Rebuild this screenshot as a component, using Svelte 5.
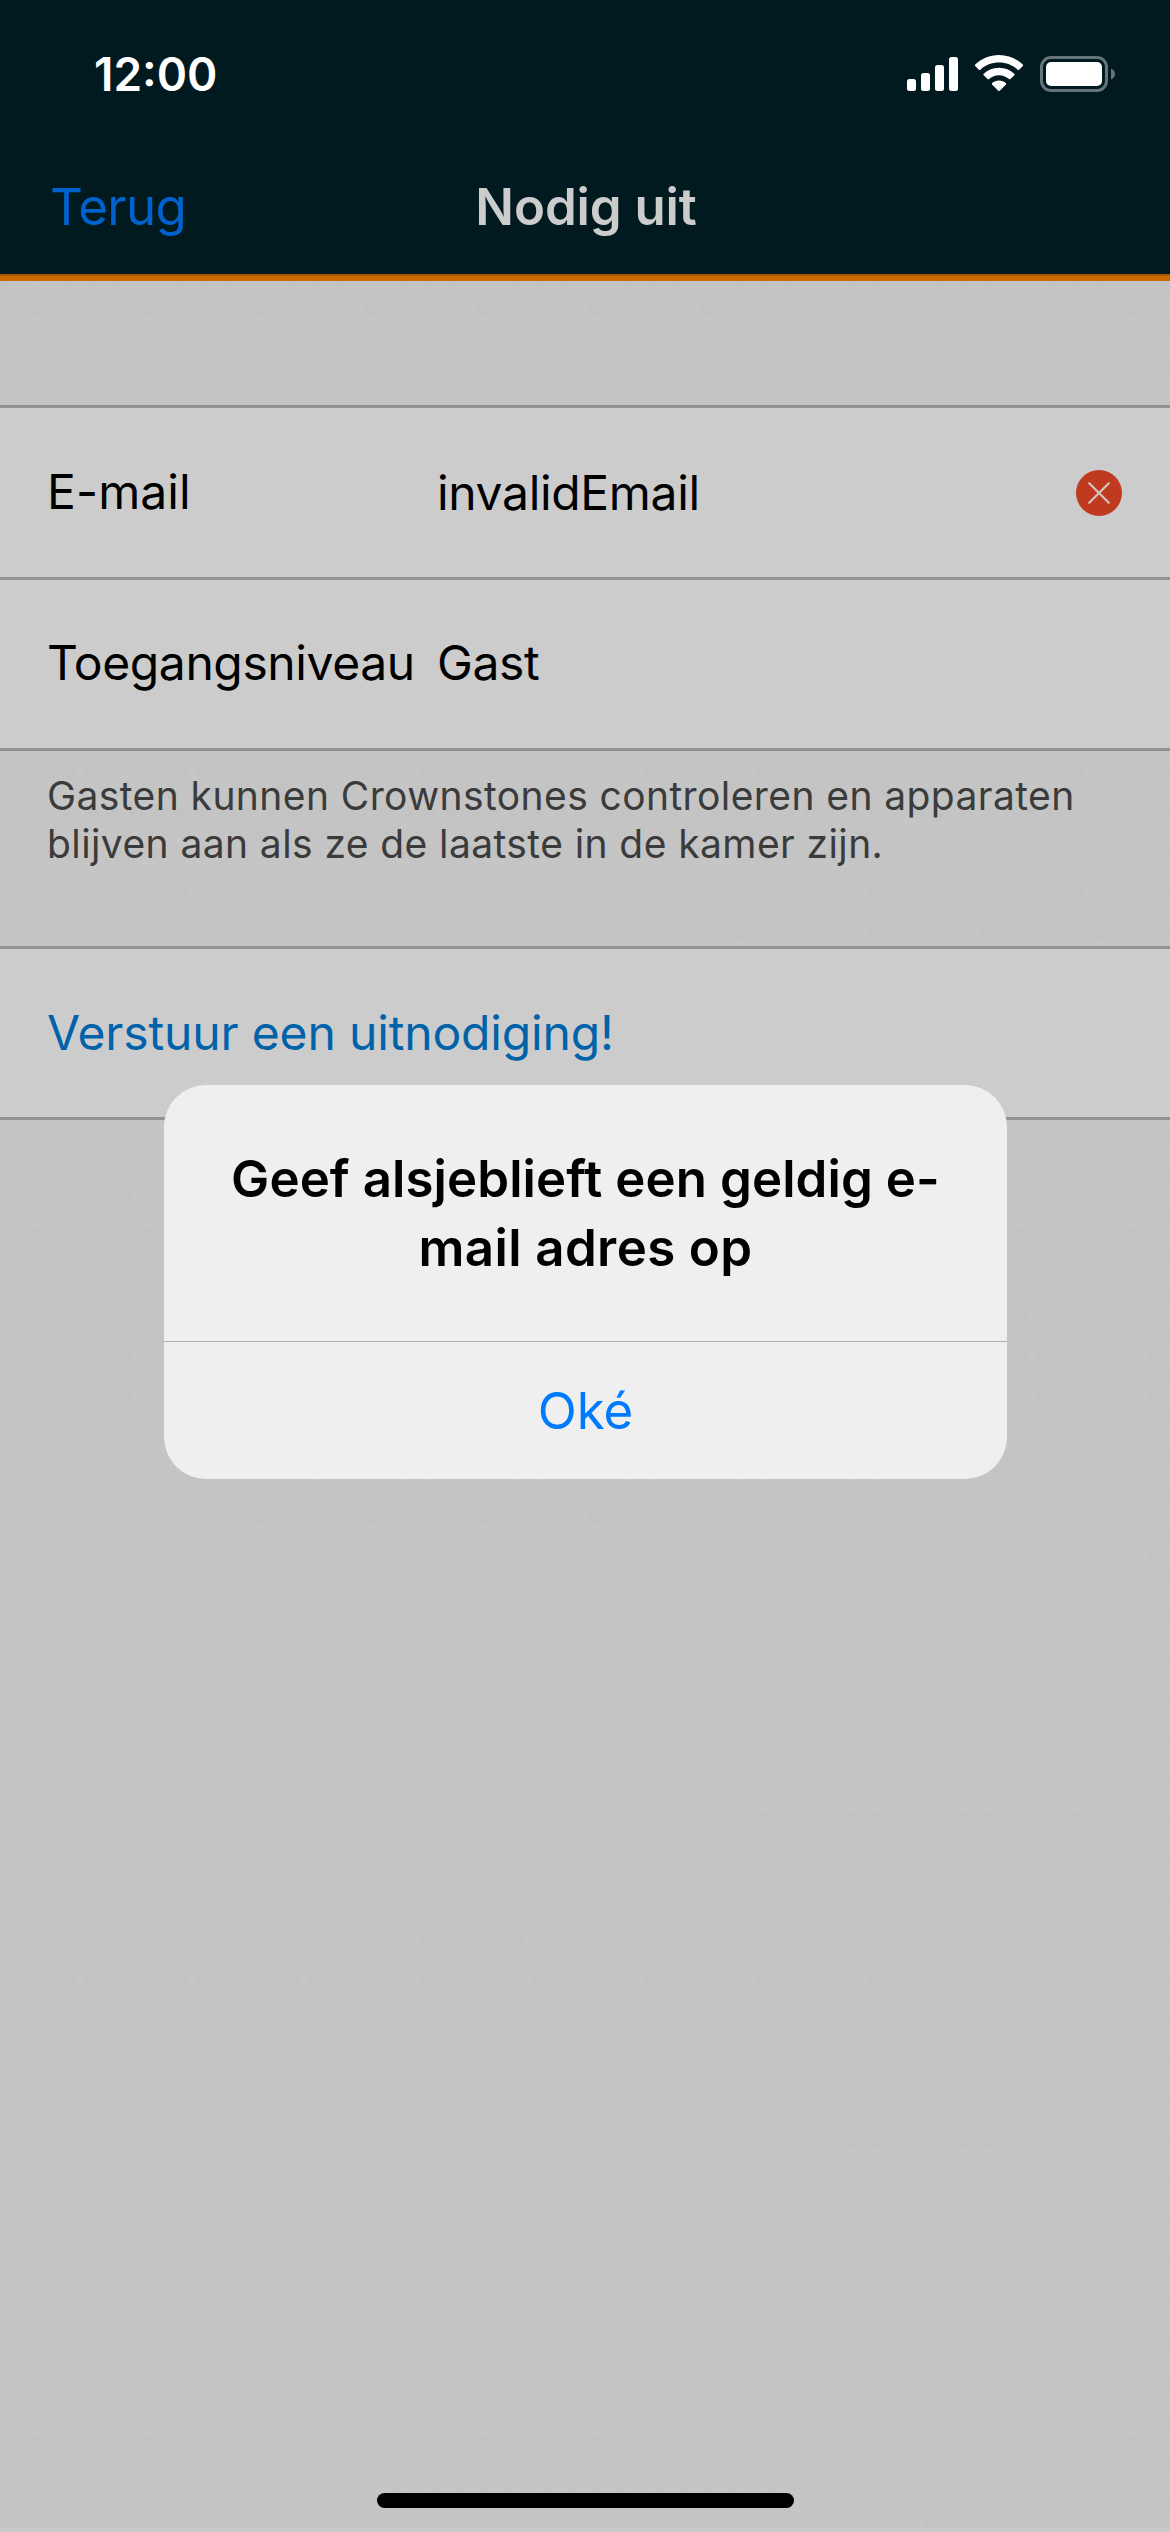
<script>
  const signalBars = [
    { x: 0, height: 12 },
    { x: 14, height: 18 },
    { x: 28, height: 26 },
    { x: 42, height: 34 }
  ];
</script>

<div class="screen">
  <header>
    <div class="status">
      <span class="time">12:00</span>
      <div class="indicators">
        <svg class="signal" width="51" height="38" viewBox="0 0 51 38">
          {#each signalBars as bar}
            <rect x={bar.x} y={36 - bar.height} width="9" height={bar.height} rx="2.5" fill="#fff" />
          {/each}
        </svg>
        <svg class="wifi" width="50" height="38" viewBox="0 0 50 38">
          <path fill="#fff" d="M25 0C34.200 0 42.600 3.600 48.800 9.500Q49.500 10.300 48.800 11.100L45.200 14.700Q44.400 15.400 43.600 14.700C38.700 10.200 32.200 7.600 25 7.600S11.300 10.200 6.400 14.700Q5.600 15.400 4.800 14.700L1.200 11.100Q0.500 10.300 1.200 9.500C7.400 3.600 15.800 0 25 0Z" />
          <path fill="#fff" d="M25 12.800C30.900 12.800 36.300 15 40.300 18.700Q41.100 19.500 40.300 20.300L36.500 24Q35.700 24.700 34.900 24C32.200 21.700 28.800 20.300 25 20.300S17.800 21.700 15.100 24Q14.300 24.700 13.500 24L9.700 20.300Q8.900 19.500 9.700 18.700C13.700 15 19.100 12.800 25 12.800Z" />
          <path fill="#fff" d="M25 25.600C27.600 25.600 30 26.500 31.800 28Q32.600 28.800 31.900 29.600L25.800 35.700Q25 36.400 24.200 35.700L18.100 29.600Q17.400 28.800 18.200 28C20 26.500 22.400 25.600 25 25.600Z" />
        </svg>
        <svg class="battery" width="76" height="38" viewBox="0 0 76 38">
          <rect x="1.500" y="2.500" width="65" height="33" rx="9.500" fill="none" stroke="#667579" stroke-width="3" />
          <rect x="6" y="7" width="56" height="24" rx="5" fill="#fff" />
          <path d="M71 13.500C73.500 14.500 75 16.700 75 19S73.500 23.500 71 24.500Z" fill="#667579" />
        </svg>
      </div>
    </div>
    <nav>
      <a class="back" href="#back">Terug</a>
      <h1>Nodig uit</h1>
    </nav>
  </header>

  <main>
    <section class="fields">
      <div class="row">
        <span class="label">E-mail</span>
        <span class="value">invalidEmail</span>
        <svg class="clear" width="46" height="46" viewBox="0 0 46 46">
          <circle cx="23" cy="23" r="23" fill="#c03a20" />
          <path d="M13.200 13.200L32.800 32.800M32.800 13.200L13.200 32.800" stroke="#d2c4c0" stroke-width="2.200" stroke-linecap="round" />
        </svg>
      </div>
      <div class="row second">
        <span class="label wide">Toegangsniveau</span>
        <span class="value guest">Gast</span>
      </div>
    </section>
    <p class="note">Gasten kunnen Crownstones controleren en apparaten<br />blijven aan als ze de laatste in de kamer zijn.</p>
    <section class="action">
      <div class="row third"><span class="send">Verstuur een uitnodiging!</span></div>
    </section>
  </main>

  <div class="alert" role="alertdialog" aria-labelledby="alert-title">
    <h2 id="alert-title">Geef alsjeblieft een geldig e-<br /><span>mail adres op</span></h2>
    <button type="button">Oké</button>
  </div>
  <div class="home"></div>
</div>

<style>
  :global(body) {
    margin: 0;
  }

  .screen {
    position: relative;
    box-sizing: border-box;
    width: 1170px;
    height: 2532px;
    overflow: hidden;
    border-bottom: 4px solid #cbcbcb;
    background-color: #c5c5c5;
    background-image:
      radial-gradient(circle at 50% 50%, #c3c3c3 0 5px, transparent 10px),
      radial-gradient(circle at 50% 50%, #c3c3c3 0 5px, transparent 10px);
    background-size: 22.400px 40.280px;
    background-position: 2px 7px, 13.200px 27.140px;
    font-family: Inter, "Liberation Sans", sans-serif;
    color: #000;
  }

  header {
    height: 274px;
    padding-bottom: 2px;
    border-bottom: 5px solid #cc6900;
    background: #001a20;
    box-shadow: inset 0 -2px #a85800;
  }

  .status {
    display: flex;
    align-items: center;
    justify-content: space-between;
    height: 148px;
    padding: 0 54px 0 94px;
  }

  .time {
    font-size: 46px;
    font-weight: 600;
    color: #fff;
  }

  .indicators {
    display: flex;
    gap: 16px;
  }

  .signal,
  .wifi,
  .battery {
    display: block;
  }

  nav {
    display: grid;
    grid-template-columns: 1fr auto 1fr;
    align-items: center;
    height: 126px;
    padding: 0 50px 10px;
    box-sizing: border-box;
    font-size: 51px;
  }

  .back {
    color: #0062cc;
    text-decoration: none;
    letter-spacing: -0.660px;
  }

  h1 {
    margin: 0;
    padding-left: 2px;
    font-size: 51px;
    font-weight: 600;
    letter-spacing: -0.110px;
    color: #ccc;
  }

  main {
    padding-top: 124px;
  }

  .fields,
  .action {
    border-top: 3px solid #929292;
  }

  .row {
    display: flex;
    align-items: center;
    height: 169px;
    padding: 0 48px 0 47px;
    border-bottom: 3px solid #929292;
    background: #ccc;
    font-size: 48px;
    line-height: 58px;
  }

  .second,
  .third {
    height: 168px;
  }

  .label {
    width: 390px;
    padding-bottom: 2px;
    letter-spacing: 0.100px;
  }

  .wide {
    letter-spacing: -0.400px;
  }

  .value {
    flex: 1;
    letter-spacing: -0.330px;
  }

  .guest {
    padding-bottom: 2px;
  }

  .note {
    height: 174px;
    margin: 0;
    padding: 21px 47px 0;
    font-size: 39px;
    line-height: 48px;
    letter-spacing: 0.410px;
    color: #3b3b3b;
    white-space: nowrap;
  }

  .send {
    letter-spacing: -0.150px;
    color: #0062a9;
  }

  .alert {
    position: absolute;
    top: 1085px;
    left: 164px;
    width: 843px;
    height: 394px;
    overflow: hidden;
    border-radius: 42px;
    background: #efefef;
    text-align: center;
  }

  h2 {
    height: 256px;
    margin: 0;
    padding-top: 59px;
    box-sizing: border-box;
    font-size: 51px;
    font-weight: 600;
    line-height: 69px;
    letter-spacing: 0.080px;
  }

  h2 span {
    letter-spacing: 0.400px;
  }

  button {
    display: block;
    width: 100%;
    height: 138px;
    padding: 0;
    border: 0;
    border-top: 1px solid #b0b0b0;
    background: none;
    font: 400 51px Inter, "Liberation Sans", sans-serif;
    color: #007aff;
  }

  .home {
    position: absolute;
    left: 377px;
    top: 2493px;
    width: 417px;
    height: 15px;
    border-radius: 8px;
    background: #000;
  }
</style>
